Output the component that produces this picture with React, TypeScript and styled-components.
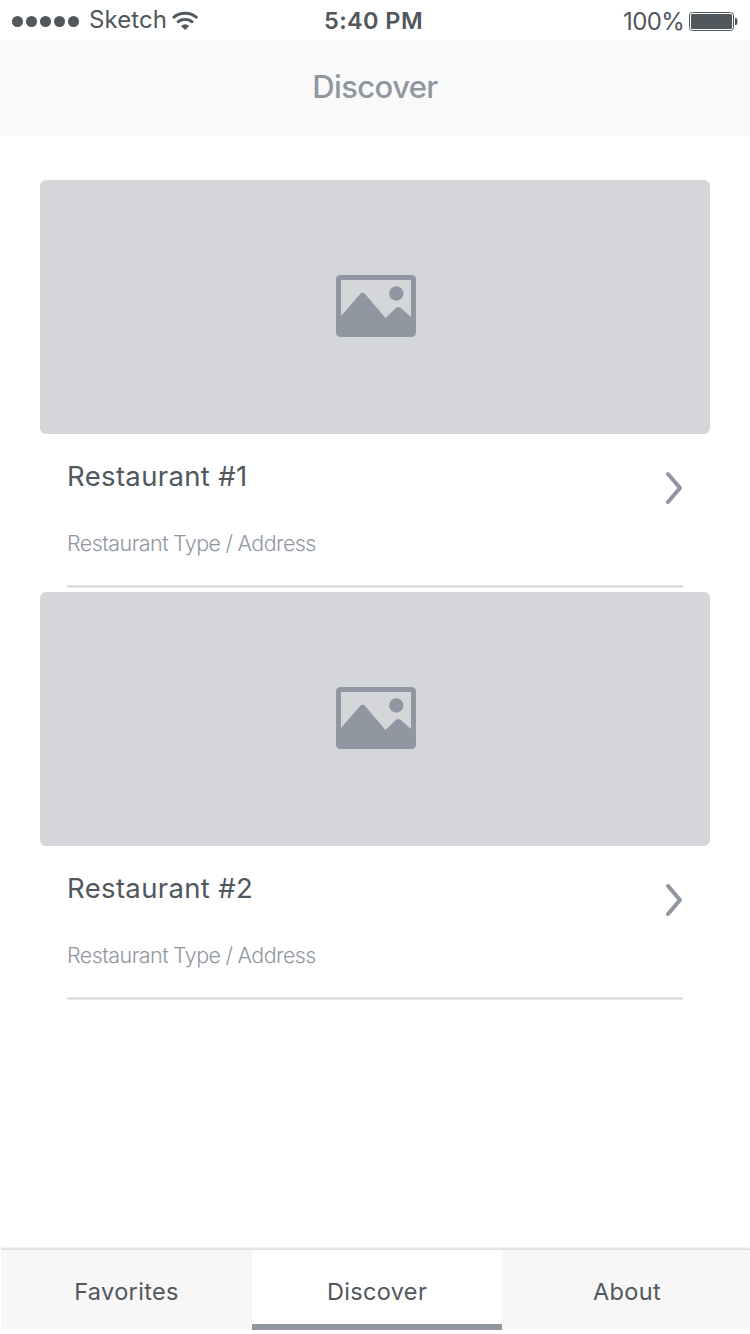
import React from "react";
import styled, { createGlobalStyle } from "styled-components";

const slate = "#50575d";
const muted = "#9097a1";

const GlobalStyle = createGlobalStyle`
  * { box-sizing: border-box; }
  body { margin: 0; background: #fff; font-family: Inter, "Liberation Sans", sans-serif; }
`;

const Screen = styled.div`
  width: 750px;
  height: 1334px;
  display: flex;
  flex-direction: column;
  background: #fff;
  overflow: hidden;
`;

const StatusBar = styled.header`
  height: 40px;
  display: grid;
  grid-template-columns: 324px 1fr 127px;
  color: ${slate};
  font-size: 24px;
  line-height: 30px;
  white-space: nowrap;
`;

const Carrier = styled.div`
  display: flex;
  padding: 5px 0 0 12px;
  align-items: flex-start;
`;

const Signal = styled.div`
  display: flex;
  gap: 3px;
  padding-top: 11px;
  margin-right: 10px;
`;

const Dot = styled.span`
  width: 11px;
  height: 11px;
  border-radius: 50%;
  background: ${slate};
`;

const CarrierName = styled.span`
  width: 83px;
  letter-spacing: 0.1px;
`;

const Wifi = styled.svg`
  margin-top: 6px;
  width: 28px;
  height: 20px;
`;

const Time = styled.div`
  padding-top: 6px;
  font-weight: 600;
  font-size: 23.5px;
  letter-spacing: 0.4px;
`;

const Power = styled.div`
  display: flex;
  padding-top: 7px;
`;

const Percent = styled.span`
  width: 66px;
  letter-spacing: -0.6px;
`;

const Battery = styled.svg`
  margin-top: 4px;
  width: 50px;
  height: 20px;
`;

const TitleBar = styled.div`
  height: 96px;
  background: #fafafa;
  display: flex;
  justify-content: center;
  padding-top: 27px;
`;

const Title = styled.h1`
  margin: 0;
  color: ${muted};
  font-size: 31px;
  line-height: 40px;
  font-weight: 500;
  letter-spacing: -0.6px;
`;

const List = styled.main`
  flex: 1;
  padding: 44px 40px 0;
`;

const Card = styled.article`
  height: 412px;
`;

const Photo = styled.div`
  height: 254px;
  border-radius: 6px;
  background: #d5d6da;
  display: flex;
  justify-content: center;
  padding: 95px 0 0 2px;
`;

const Details = styled.div`
  height: 154px;
  margin: 0 27px;
  padding-top: 25px;
  display: flex;
  justify-content: space-between;
  background: linear-gradient(#e7eaec 0 1px, #d3d7da 1px 2px, #e7eaec 2px 3px) bottom / 100% 3px no-repeat;
`;

const Name = styled.h2`
  margin: 0;
  color: ${slate};
  font-size: 27.5px;
  line-height: 34px;
  font-weight: 400;
  letter-spacing: 0.35px;
`;

const Address = styled.p`
  margin: 36px 0 0;
  color: ${muted};
  font-size: 21.5px;
  line-height: 28px;
  font-weight: 300;
  letter-spacing: -0.55px;
  word-spacing: -0.5px;
`;

const Chevron = styled.svg`
  width: 18px;
  height: 34px;
  margin-top: 12px;
`;

const TabBar = styled.nav`
  height: 83px;
  margin: 0 0 4px 1px;
  display: grid;
  grid-template-columns: 251px 250px 248px;
  padding-top: 3px;
  background: linear-gradient(#f4f4f4 0 1px, #e8e8e8 1px 2px, #dedede 2px 3px) top / 100% 3px no-repeat;
  border-radius: 2px;
  overflow: hidden;
`;

const Tab = styled.div<{ $active?: boolean; $shift: number }>`
  background: ${(p) => (p.$active ? "#fff" : "#f7f7f7")};
  border-bottom: ${(p) => (p.$active ? `6px solid ${muted}` : "none")};
  color: ${slate};
  font-size: 23.5px;
  line-height: 30px;
  letter-spacing: 0.35px;
  text-align: center;
  padding: 27px 0 0 ${(p) => p.$shift}px;
`;

const PictureIcon = () => (
  <svg width="80" height="62" viewBox="0 0 80 62">
    <rect width="80" height="62" rx="4.5" fill={muted} />
    <path
      d="M5 5H75V42L64.5 32.8Q62.3 31 60.1 32.8L49.5 43L29.3 19.2Q26.6 16.5 23.9 19.2L5 41Z"
      fill="#d5d6da"
    />
    <circle cx="60.3" cy="18.5" r="7.2" fill={muted} />
  </svg>
);

const restaurants = [
  { name: "Restaurant #1", address: "Restaurant Type / Address" },
  { name: "Restaurant #2", address: "Restaurant Type / Address" },
];

export default function App() {
  return (
    <Screen>
      <GlobalStyle />
      <StatusBar>
        <Carrier>
          <Signal>
            {[0, 1, 2, 3, 4].map((n) => (
              <Dot key={n} />
            ))}
          </Signal>
          <CarrierName>Sketch</CarrierName>
          <Wifi viewBox="0 0 28 20">
            <g fill="none" stroke={slate} strokeWidth="2.8">
              <path d="M0.9 7A18 18 0 0 1 25.3 7" />
              <path d="M5.2 11.5A11.8 11.8 0 0 1 21 11.5" />
            </g>
            <path d="M9 15Q13.1 11.6 17.2 15L13.1 19Z" fill={slate} />
          </Wifi>
        </Carrier>
        <Time>5:40 PM</Time>
        <Power>
          <Percent>100%</Percent>
          <Battery viewBox="0 0 50 20">
            <rect x="0.5" y="1.5" width="44" height="18" rx="3" fill="none" stroke={slate} />
            <rect x="2" y="3" width="41" height="15" rx="1.5" fill={slate} />
            <path d="M46 7H47Q48.4 7.3 48.4 9V12Q48.4 13.7 47 14H46Z" fill={slate} />
          </Battery>
        </Power>
      </StatusBar>
      <TitleBar>
        <Title>Discover</Title>
      </TitleBar>
      <List>
        {restaurants.map((r) => (
          <Card key={r.name}>
            <Photo>
              <PictureIcon />
            </Photo>
            <Details>
              <div>
                <Name>{r.name}</Name>
                <Address>{r.address}</Address>
              </div>
              <Chevron viewBox="0 0 18 34">
                <path
                  d="M3 3L15 17L3 31"
                  fill="none"
                  stroke={muted}
                  strokeWidth="4"
                  strokeLinecap="round"
                  strokeLinejoin="round"
                />
              </Chevron>
            </Details>
          </Card>
        ))}
      </List>
      <TabBar>
        <Tab $shift={0}>Favorites</Tab>
        <Tab $active $shift={0}>
          Discover
        </Tab>
        <Tab $shift={2}>About</Tab>
      </TabBar>
    </Screen>
  );
}
